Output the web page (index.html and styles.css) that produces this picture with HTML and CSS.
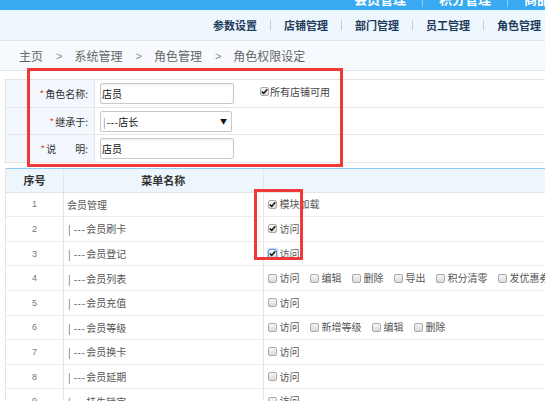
FILE: index.html
```html
<!DOCTYPE html>
<html lang="zh">
<head>
<meta charset="utf-8">
<title>角色权限设定</title>
<link rel="stylesheet" href="styles.css">
</head>
<body>
<div class="top">
  <div class="topnav"><span>会员管理</span><i></i><span>积分管理</span><i></i><span>商品管理</span></div>
</div>
<div class="subnav">
  <a>参数设置</a><i></i><a>店铺管理</a><i></i><a>部门管理</a><i></i><a>员工管理</a><i></i><a>角色管理</a>
</div>
<div class="crumb">
  <span>主页</span><span class="gt">&gt;</span><span>系统管理</span><span class="gt">&gt;</span><span>角色管理</span><span class="gt">&gt;</span><span>角色权限设定</span>
</div>

<div class="form">
  <div class="frow">
    <div class="flabel"><em>*</em>角色名称:</div>
    <div class="fval"><div class="input">店员</div></div>
    <div class="fext"><span class="opt"><span class="cb on"><svg viewBox="0 0 7 7"><path d="M0.8 3.5 L2.7 5.4 L6.3 1.2"/></svg></span>所有店铺可用</span></div>
  </div>
  <div class="frow">
    <div class="flabel"><em>*</em>继承于:</div>
    <div class="fval"><div class="select"><span><b class="bar">|</b><span class="dash">---</span>店长</span><span class="arrow">▼</span></div></div>
    <div class="fext"></div>
  </div>
  <div class="frow">
    <div class="flabel"><em>*</em>说<span class="sp"></span>明:</div>
    <div class="fval"><div class="input">店员</div></div>
    <div class="fext"></div>
  </div>
</div>

<div class="grid">
  <div class="hrow">
    <div class="c1">序号</div><div class="c2">菜单名称</div><div class="c3"></div>
  </div>
  <div class="row">
    <div class="c1">1</div><div class="c2">会员管理</div>
    <div class="c3"><span class="opt"><span class="cb on"><svg viewBox="0 0 7 7"><path d="M0.8 3.5 L2.7 5.4 L6.3 1.2"/></svg></span>模块加载</span></div>
  </div>
  <div class="row">
    <div class="c1">2</div><div class="c2"><span class="vb">|</span><span class="dash">---</span>会员刷卡</div>
    <div class="c3"><span class="opt"><span class="cb on"><svg viewBox="0 0 7 7"><path d="M0.8 3.5 L2.7 5.4 L6.3 1.2"/></svg></span>访问</span></div>
  </div>
  <div class="row">
    <div class="c1">3</div><div class="c2"><span class="vb">|</span><span class="dash">---</span>会员登记</div>
    <div class="c3"><span class="opt"><span class="cb on focus"><svg viewBox="0 0 7 7"><path d="M0.8 3.5 L2.7 5.4 L6.3 1.2"/></svg></span>访问</span></div>
  </div>
  <div class="row">
    <div class="c1">4</div><div class="c2"><span class="vb">|</span><span class="dash">---</span>会员列表</div>
    <div class="c3">
      <span class="opt"><span class="cb"></span>访问</span>
      <span class="opt"><span class="cb"></span>编辑</span>
      <span class="opt"><span class="cb"></span>删除</span>
      <span class="opt"><span class="cb"></span>导出</span>
      <span class="opt"><span class="cb"></span>积分清零</span>
      <span class="opt"><span class="cb"></span>发优惠券</span>
    </div>
  </div>
  <div class="row">
    <div class="c1">5</div><div class="c2"><span class="vb">|</span><span class="dash">---</span>会员充值</div>
    <div class="c3"><span class="opt"><span class="cb"></span>访问</span></div>
  </div>
  <div class="row">
    <div class="c1">6</div><div class="c2"><span class="vb">|</span><span class="dash">---</span>会员等级</div>
    <div class="c3">
      <span class="opt"><span class="cb"></span>访问</span>
      <span class="opt"><span class="cb"></span>新增等级</span>
      <span class="opt"><span class="cb"></span>编辑</span>
      <span class="opt"><span class="cb"></span>删除</span>
    </div>
  </div>
  <div class="row">
    <div class="c1">7</div><div class="c2"><span class="vb">|</span><span class="dash">---</span>会员换卡</div>
    <div class="c3"><span class="opt"><span class="cb"></span>访问</span></div>
  </div>
  <div class="row">
    <div class="c1">8</div><div class="c2"><span class="vb">|</span><span class="dash">---</span>会员延期</div>
    <div class="c3"><span class="opt"><span class="cb"></span>访问</span></div>
  </div>
  <div class="row">
    <div class="c1">9</div><div class="c2"><span class="vb">|</span><span class="dash">---</span>挂失锁定</div>
    <div class="c3"><span class="opt"><span class="cb"></span>访问</span></div>
  </div>
</div>

<div class="mark m1"></div>
<div class="mark m2"></div>
</body>
</html>
```

FILE: styles.css
```css
html, body {
  margin: 0;
  padding: 0;
}
body {
  width: 545px;
  height: 401px;
  overflow: hidden;
  position: relative;
  background: #fff;
  font-family: "Noto Sans CJK SC", "Liberation Sans", sans-serif;
  color: #555;
}

/* top blue bar */
.top {
  height: 10px;
  background: #39aaf1;
  overflow: hidden;
}
.topnav {
  display: flex;
  align-items: center;
  padding-left: 354px;
  margin-top: -9px;
  white-space: nowrap;
}
.topnav span {
  flex-shrink: 0;
  color: #fff;
  font-weight: bold;
  font-size: 13px;
  line-height: 16px;
}
.topnav i {
  flex-shrink: 0;
  width: 1px;
  height: 16px;
  background: rgba(255, 255, 255, 0.4);
  margin: 0 16px;
}

/* second nav */
.subnav {
  height: 30px;
  background: #eef7fd;
  border-bottom: 1px solid #dbe5ec;
  display: flex;
  align-items: center;
  justify-content: flex-end;
  padding-right: 4px;
}
.subnav a {
  font-size: 11px;
  font-weight: bold;
  color: #1e3a5c;
  line-height: 14px;
}
.subnav i {
  width: 1px;
  height: 10px;
  background: #c5ccd3;
  margin: 0 13px;
}

/* breadcrumb */
.crumb {
  height: 29px;
  background: #f6fafe;
  border-bottom: 1px solid #e1e5e9;
  display: flex;
  align-items: center;
  padding-left: 19px;
  font-size: 12px;
  color: #666;
}
.crumb .gt {
  margin: 0 12px 0 13px;
  color: #888;
  font-family: "Liberation Sans", sans-serif;
  font-size: 11px;
}

/* form */
.form {
  margin: 8px 0 0 5px;
  border-top: 1px solid #e3e3e3;
  border-left: 1px solid #e3e3e3;
}
.frow {
  display: grid;
  grid-template-columns: 89px 165px 1fr;
  height: 27.7px;
  box-sizing: border-box;
  border-bottom: 1px solid #e6e6e6;
  font-size: 10px;
}
.flabel {
  background: #f2f8fd;
  border-right: 1px solid #e6e6e6;
  display: flex;
  align-items: center;
  justify-content: flex-end;
  padding-right: 6px;
  color: #333;
}
.flabel em {
  font-style: normal;
  color: #e8452c;
  margin-right: 1px;
}
.flabel .sp {
  display: inline-block;
  width: 19px;
}
.fval {
  display: flex;
  align-items: center;
  padding-left: 5px;
}
.input {
  width: 134px;
  height: 21px;
  box-sizing: border-box;
  border: 1px solid #c9c9c9;
  border-radius: 2px;
  box-shadow: inset 0 1px 2px rgba(0, 0, 0, 0.08);
  display: flex;
  align-items: center;
  padding-left: 1px;
  font-size: 10px;
  color: #111;
}
.select {
  width: 132px;
  height: 21px;
  box-sizing: border-box;
  border: 1px solid #c9c9c9;
  border-radius: 2px;
  display: flex;
  align-items: center;
  justify-content: space-between;
  padding: 0 4px 0 2px;
  font-size: 10px;
  color: #111;
}
.select .bar {
  font-weight: normal;
  color: #9a78c8;
  margin-right: 1px;
}
.select .dash {
  letter-spacing: 0.4px;
}
.select .arrow {
  font-size: 7px;
  color: #111;
}
.fext {
  padding-top: 3px;
  padding-left: 0;
}

/* checkbox options */
.opt {
  display: inline-flex;
  align-items: center;
  flex-shrink: 0;
  white-space: nowrap;
  margin-right: 10px;
  font-size: 10px;
  color: #555;
  line-height: 14px;
}
.fext .opt {
  color: #444;
}
.cb {
  flex-shrink: 0;
  width: 9px;
  height: 9px;
  box-sizing: border-box;
  border: 1px solid #a9a9a9;
  border-radius: 2px;
  background: linear-gradient(#f6f6f6, #dadada);
  margin-right: 3px;
  display: inline-flex;
  align-items: center;
  justify-content: center;
}
.fext .cb {
  margin-right: 1px;
}
.cb svg {
  width: 7px;
  height: 7px;
  fill: none;
  stroke: #1b1b1b;
  stroke-width: 1.6;
}
.cb.focus {
  border-color: #5d9ae0;
  box-shadow: 0 0 1px 1px rgba(90, 150, 230, 0.45);
}

/* menu grid */
.grid {
  margin: 5px 0 0 5px;
  border-left: 1px solid #e3e3e3;
}
.hrow, .row {
  display: grid;
  grid-template-columns: 58px 199.5px 1fr;
  box-sizing: border-box;
}
.hrow {
  height: 24.5px;
  background: #eef6fd;
  border-top: 1px solid #8ccdf5;
  border-bottom: 1px solid #e3e3e3;
  font-size: 11px;
  font-weight: bold;
  color: #333;
}
.row {
  height: 24.6px;
  border-bottom: 1px solid #ececec;
  font-size: 10px;
  color: #555;
}
.c1, .c2, .c3 {
  display: flex;
  align-items: center;
  white-space: nowrap;
  min-width: 0;
}
.c1 {
  justify-content: center;
  border-right: 1px solid #e6e6e6;
}
.row .c1 {
  color: #777;
  font-family: "Liberation Sans", sans-serif;
  font-size: 9px;
}
.c2 {
  padding-left: 3px;
  border-right: 1px solid #e6e6e6;
}
.hrow .c2 {
  justify-content: center;
  padding-left: 0;
}
.c2 .vb {
  margin: 0 3px 0 1px;
  color: #666;
}
.c2 .dash {
  letter-spacing: 0.4px;
  margin-right: 1px;
}
.c3 {
  padding-left: 4px;
  overflow: hidden;
}

/* red annotation boxes */
.mark {
  position: absolute;
  border: 3px solid #f03838;
  box-sizing: border-box;
}
.m1 {
  left: 27px;
  top: 68px;
  width: 316px;
  height: 99px;
}
.m2 {
  left: 254px;
  top: 189px;
  width: 49px;
  height: 71px;
}
```
